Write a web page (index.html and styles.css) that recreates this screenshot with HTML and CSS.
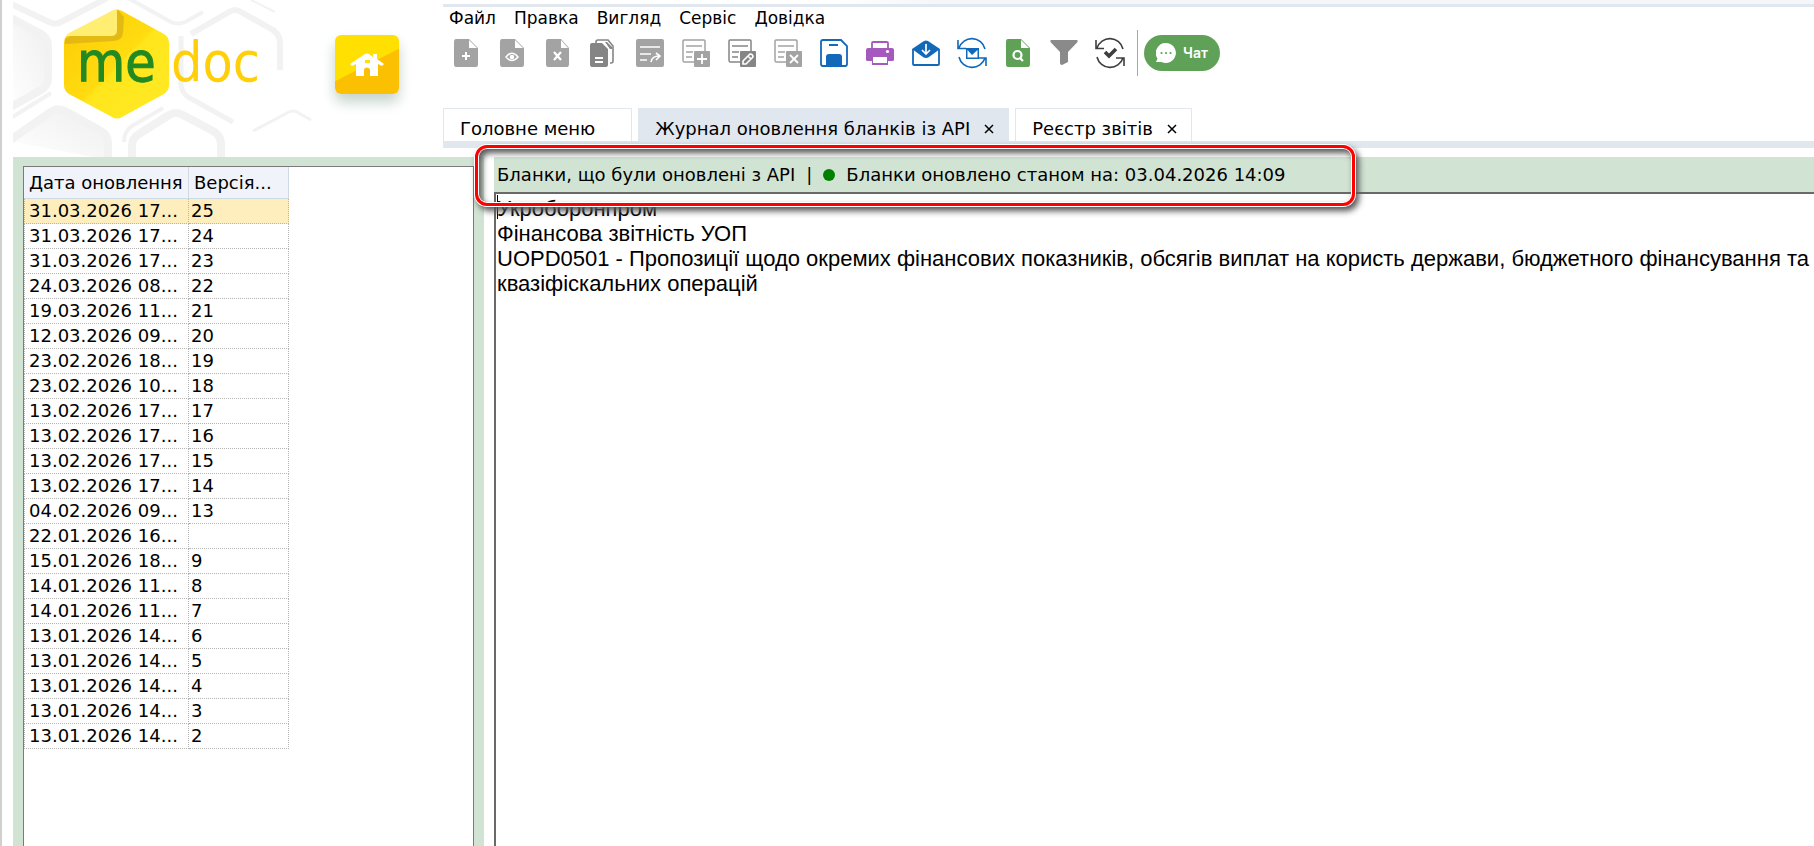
FILE: index.html
```html
<!DOCTYPE html>
<html lang="uk">
<head>
<meta charset="utf-8">
<title>Журнал оновлення бланків із API</title>
<link rel="stylesheet" href="styles.css">
</head>
<body>
<div class="app">
<header class="header">
  <div class="brand">
    <svg class="brand-art" viewBox="0 0 330 157" width="330" height="157" role="img" aria-label="medoc">
      <defs>
        <linearGradient id="gold" x1="0" y1="0" x2="1" y2="1">
          <stop offset="0" stop-color="#fdcb05"/><stop offset=".5" stop-color="#ffdb10"/><stop offset=".53" stop-color="#ffe61c"/><stop offset="1" stop-color="#ffea26"/>
        </linearGradient>
        <linearGradient id="cell" x1="0" y1="1" x2="1" y2="0">
          <stop offset="0" stop-color="#fff"/><stop offset="1" stop-color="#efefef"/>
        </linearGradient>
      </defs>
      <g stroke="#f2f2f2" stroke-width="8" stroke-linejoin="round" fill="none">
        <path fill="url(#cell)" d="M-4 17 28 34Q35 38 35 46V78Q35 86 28 90L-4 108"/>
        <path fill="url(#cell)" d="M-4 141 36 113Q45 106 54 112L88 131Q95 135 95 143V160"/>
        <path d="M119 160V146Q119 138 126 134L156 115Q163 111 170 115L200 131Q208 136 208 144V160"/>
        <path stroke-width="6" d="M-4 3 36 22Q42 25 48 22L94 -2"/>
        <path stroke-width="4" d="M-4 119 38 93M111 142Q111 131 119 126L150 108"/>
        <path stroke-width="4" d="M115 -2 158 22Q165 25 172 22L190 12"/>
        <path stroke-width="6" d="M178 34 216 12Q222 8 228 12L260 30Q267 35 267 43V70"/>
        <path stroke-width="5" d="M168 36V84Q168 92 175 97L220 122"/>
        <path stroke-width="3" d="M240 131 276 112Q280 110 284 112L298 120"/>
        <path stroke-width="2" d="M238 0 262 12"/>
      </g>
      <path fill="url(#gold)" d="M99 11Q104 8 109 11L151 34Q156 37 156 43V85Q156 91 151 94L109 117Q104 120 99 117L56 94Q51 91 51 85V43Q51 37 56 34Z"/>
      <path fill="#d9b016" opacity=".75" d="M105 10 111 17 110 33Q109 41 100 41L52 44V39Z"/>
      <path fill="#ffee72" d="M104 10V30Q104 36 98 36H54Q52 36 56 33L99 11Q102 9 104 10Z"/>
      <text class="logo-me" x="64" y="81">me</text>
      <text class="logo-doc" x="158" y="81">doc</text>
    </svg>
    <button class="home" aria-label="Головна">
      <svg viewBox="0 0 34 24" width="34" height="24"><path fill="#fff" d="M0 11 15 1Q17 0 19 1L23 4V1H27V6L34 11 32 13 28 11V23H20V16Q17 13 14 16V23H6V11L2 13ZM15 7V10H20V7Z"/></svg>
    </button>
  </div>
  <div class="top">
    <nav class="menu">
      <a href="#">Файл</a><a href="#">Правка</a><a href="#">Вигляд</a><a href="#">Сервіс</a><a href="#">Довідка</a>
    </nav>
    <div class="toolbar">
      <button class="tool" aria-label="Створити"><svg viewBox="0 0 28 28"><path fill="#a3a3a3" d="M4 0H17L26 9V25Q26 28 24 28H4Q2 28 2 25V3Q2 0 4 0Z"/><path fill="#fff" d="M17 1V9H25Z"/><path stroke="#fff" stroke-width="2" d="M14 13V21M10 17H18"/></svg></button>
      <button class="tool" aria-label="Переглянути"><svg viewBox="0 0 28 28"><path fill="#a3a3a3" d="M4 0H17L26 9V25Q26 28 24 28H4Q2 28 2 25V3Q2 0 4 0Z"/><path fill="#fff" d="M17 1V9H25Z"/><path fill="none" stroke="#fff" stroke-width="1.500" d="M8 18Q14 10.500 20 18Q14 25 8 18Z"/><circle cx="14" cy="18" r="2.300" fill="#fff"/></svg></button>
      <button class="tool" aria-label="Видалити"><svg viewBox="0 0 28 28"><path fill="#a3a3a3" d="M4 0H17L25 9V25Q25 28 23 28H4Q2 28 2 25V3Q2 0 4 0Z"/><path fill="#fff" d="M17 1V9H24Z"/><path stroke="#fff" stroke-width="2.200" d="M10 13 17 21M17 13 10 21"/></svg></button>
      <button class="tool" aria-label="Копіювати"><svg viewBox="0 0 28 28"><path fill="none" stroke="#858585" stroke-width="1.600" d="M6 4V3Q6 1 8 1H18L23 7V22Q23 24 21 24H20"/><path fill="#858585" d="M2 4H12L18 10V26Q18 28 16 28H2Q0 28 0 26V6Q0 4 2 4ZM15 3H17L22 8V10H20Z"/><path stroke="#fff" stroke-width="1.800" d="M5 19H13M5 23H13"/></svg></button>
      <button class="tool" aria-label="Перемістити"><svg viewBox="0 0 28 28"><rect width="28" height="28" rx="2" fill="#a3a3a3"/><path fill="none" stroke="#fff" stroke-width="1.600" d="M4 8H24M4 15H15M4 21H11M15 23Q16 17 23 17M20 14 24 17 20 21"/></svg></button>
      <button class="tool" aria-label="Додати рядок"><svg viewBox="0 0 28 28"><path fill="none" stroke="#a3a3a3" stroke-width="1.500" d="M23 12V2Q23 1 22 1H2Q1 1 1 2V21Q1 23 2 23H12M4 7H20M4 13H11M4 18H10"/><rect x="12" y="12" width="16" height="16" rx="1" fill="#a3a3a3"/><path stroke="#fff" stroke-width="1.800" d="M20 15V25M15 20H25"/></svg></button>
      <button class="tool" aria-label="Редагувати рядок"><svg viewBox="0 0 28 28"><path fill="none" stroke="#858585" stroke-width="1.500" d="M23 12V2Q23 1 22 1H2Q1 1 1 2V21Q1 23 2 23H12M4 7H20M4 13H11M4 18H10"/><rect x="12" y="12" width="16" height="16" rx="1" fill="#858585"/><path fill="none" stroke="#fff" stroke-width="1.600" d="M15 22 22 15Q25 15 25 18L18 25H15ZM20 17 23 20"/></svg></button>
      <button class="tool" aria-label="Видалити рядок"><svg viewBox="0 0 28 28"><path fill="none" stroke="#a3a3a3" stroke-width="1.500" d="M23 12V2Q23 1 22 1H2Q1 1 1 2V21Q1 23 2 23H12M4 7H20M4 13H11M4 18H10"/><rect x="12" y="12" width="16" height="16" rx="1" fill="#a3a3a3"/><path stroke="#fff" stroke-width="1.800" d="M16 16 24 24M24 16 16 24"/></svg></button>
      <button class="tool" aria-label="Зберегти"><svg viewBox="0 0 28 28"><path fill="none" stroke="#1268b9" stroke-width="1.800" d="M3 1H21L27 7V25Q27 27 25 27H3Q1 27 1 25V3Q1 1 3 1ZM9 6H18"/><path fill="#1268b9" d="M6 27V18Q6 15 9 15H19Q22 15 22 18V27Z"/></svg></button>
      <button class="tool" aria-label="Друк"><svg viewBox="0 0 28 28"><path fill="none" stroke="#a659bd" stroke-width="1.800" d="M6 10V4Q6 3 7 3H21Q22 3 22 4V10"/><path fill="#a659bd" d="M2 9H26Q28 9 28 11V21Q28 22 26 22H22V26H6V22H2Q0 22 0 21V11Q0 9 2 9Z"/><path fill="#fff" d="M7 18H21V24H7Z"/><circle cx="21.500" cy="12.500" r="1.600" fill="#fff"/></svg></button>
      <button class="tool" aria-label="Отримати пошту"><svg viewBox="0 0 28 28"><path fill="none" stroke="#1268b9" stroke-width="1.800" stroke-linejoin="round" d="M1 10V25Q1 26 2 26H26Q27 26 27 25V10"/><path fill="#1268b9" d="M0 10 12 2Q14 1 16 2L28 10 17 18Q14 20 11 18Z"/><path fill="none" stroke="#fff" stroke-width="1.700" d="M14 5V14M10 11 14 15 18 11"/></svg></button>
      <button class="tool" aria-label="Обмін поштою"><svg viewBox="0 0 28 28"><path fill="none" stroke="#1268b9" stroke-width="1.600" d="M27 10A13.500 13.500 0 0 0 1 9M0 1V9.500H8M1 18A13.500 13.500 0 0 0 27 19M28 27V19H20"/><rect x="8" y="9" width="13" height="11" fill="#1268b9"/><path fill="#fff" d="M9.500 11 14 16 19.500 11V18.500H9.500Z"/></svg></button>
      <button class="tool" aria-label="Пошук документа"><svg viewBox="0 0 28 28"><path fill="#5fa257" d="M4 0H17L26 9V25Q26 28 24 28H4Q2 28 2 25V3Q2 0 4 0Z"/><path fill="#fff" d="M17 1V9H25Z"/><circle cx="13.500" cy="16" r="4" fill="none" stroke="#fff" stroke-width="2.200"/><path stroke="#fff" stroke-width="2.200" d="M16 19 19 22"/></svg></button>
      <button class="tool" aria-label="Фільтр"><svg viewBox="0 0 28 28"><path fill="#8a8a8a" d="M1 1H27Q28 1 27.500 3L18 13V23L12 26Q10 26 10 24V13L.5 3Q0 1 1 1Z"/></svg></button>
      <button class="tool" aria-label="Перевірити"><svg viewBox="0 0 28 28"><path fill="none" stroke="#3f3f3f" stroke-width="1.600" d="M27 10A13.500 13.500 0 0 0 1 9M0 1V9.500H8M1 18A13.500 13.500 0 0 0 27 19M28 27V19H20"/><path fill="none" stroke="#3f3f3f" stroke-width="3.600" d="M9 13 13 17 20 10"/></svg></button>
      <span class="divider"></span>
      <button class="chat"><svg viewBox="0 0 20 20" width="20" height="20"><path fill="#fff" d="M10 0A10 10 0 1 1 5.500 19H0L1.500 15.500A10 10 0 0 1 10 0Z"/><g fill="#5fa257"><circle cx="5.500" cy="10" r="1.100"/><circle cx="10" cy="10" r="1.100"/><circle cx="14.500" cy="10" r="1.100"/></g></svg>Чат</button>
    </div>
    <div class="tabs">
      <button class="tab tab-main">Головне меню</button>
      <button class="tab tab-active">Журнал оновлення бланків із API<svg class="close" viewBox="0 0 10 10"><path d="M1 1 9 9M9 1 1 9"/></svg></button>
      <button class="tab">Реєстр звітів<svg class="close" viewBox="0 0 10 10"><path d="M1 1 9 9M9 1 1 9"/></svg></button>
    </div>
  </div>
</header>
<main class="main">
  <section class="side">
    <div class="list">
      <table class="grid">
        <thead><tr><th class="col-date">Дата оновлення</th><th class="col-ver">Версія...</th></tr></thead>
        <tbody>
          <tr class="selected"><td>31.03.2026 17...</td><td>25</td></tr>
          <tr><td>31.03.2026 17...</td><td>24</td></tr>
          <tr><td>31.03.2026 17...</td><td>23</td></tr>
          <tr><td>24.03.2026 08...</td><td>22</td></tr>
          <tr><td>19.03.2026 11...</td><td>21</td></tr>
          <tr><td>12.03.2026 09...</td><td>20</td></tr>
          <tr><td>23.02.2026 18...</td><td>19</td></tr>
          <tr><td>23.02.2026 10...</td><td>18</td></tr>
          <tr><td>13.02.2026 17...</td><td>17</td></tr>
          <tr><td>13.02.2026 17...</td><td>16</td></tr>
          <tr><td>13.02.2026 17...</td><td>15</td></tr>
          <tr><td>13.02.2026 17...</td><td>14</td></tr>
          <tr><td>04.02.2026 09...</td><td>13</td></tr>
          <tr><td>22.01.2026 16...</td><td></td></tr>
          <tr><td>15.01.2026 18...</td><td>9</td></tr>
          <tr><td>14.01.2026 11...</td><td>8</td></tr>
          <tr><td>14.01.2026 11...</td><td>7</td></tr>
          <tr><td>13.01.2026 14...</td><td>6</td></tr>
          <tr><td>13.01.2026 14...</td><td>5</td></tr>
          <tr><td>13.01.2026 14...</td><td>4</td></tr>
          <tr><td>13.01.2026 14...</td><td>3</td></tr>
          <tr><td>13.01.2026 14...</td><td>2</td></tr>
        </tbody>
      </table>
    </div>
  </section>
  <section class="detail">
    <div class="status">
      <label for="forms">Бланки, що були оновлені з API</label><span>|</span><i class="dot"></i><span>Бланки оновлено станом на: 03.04.2026 14:09</span>
    </div>
    <textarea class="editor" id="forms" spellcheck="false">Укроборонпром
Фінансова звітність УОП
UOPD0501 - Пропозиції щодо окремих фінансових показників, обсягів виплат на користь держави, бюджетного фінансування та квазіфіскальних операцій</textarea>
    <span class="caret"></span>
    <div class="highlight"></div>
  </section>
</main>
</div>
</body>
</html>
```
FILE: styles.css
```css
* { box-sizing: border-box; }

body {
  margin: 0;
  background: #fff;
  color: #000;
  font: 18px/20px "DejaVu Sans", Verdana, sans-serif;
}

button {
  border: 0;
  padding: 0;
  background: none;
  color: inherit;
  font: inherit;
}

.app {
  display: flex;
  flex-direction: column;
  height: 100vh;
  overflow: hidden;
  padding-left: 11px;
  border-left: 2px solid #d0d0d0;
}

/* Header */
.header { display: flex; flex: none; }

.brand {
  display: flex;
  align-items: flex-start;
  flex: none;
  width: 430px;
}

.brand-art { flex: none; margin-right: -8px; }

.logo-me, .logo-doc {
  font-family: "DejaVu Sans Condensed", "DejaVu Sans", sans-serif;
  font-size: 55px;
}

.logo-me { fill: #238a22; stroke: #238a22; }
.logo-doc { fill: #ffd00a; }

.home {
  display: flex;
  align-items: center;
  justify-content: center;
  width: 64px;
  height: 59px;
  margin-top: 35px;
  border-radius: 6px;
  background: linear-gradient(153deg, #ffe000 50%, #fbc002 51%);
  box-shadow: 0 8px 14px #c5d3cb;
}

.top {
  display: flex;
  flex: 1;
  flex-direction: column;
  min-width: 0;
}

.top::before {
  content: "";
  height: 4px;
  background: linear-gradient(90deg, #fff 28%, #f4f6f9 36%);
}

.menu {
  display: flex;
  gap: 18px;
  height: 26px;
  padding: 1px 6px;
  border-top: 3px solid #e0e7ef;
  font-size: 17px;
}

.menu a { color: inherit; text-decoration: none; }

.toolbar { display: flex; align-items: center; height: 46px; }

.tool {
  display: flex;
  align-items: center;
  justify-content: center;
  width: 46px;
  height: 46px;
}

.tool svg { width: 28px; height: 28px; overflow: visible; }

.divider {
  width: 1px;
  height: 46px;
  margin: 0 6px 0 4px;
  background: #a8a8a8;
}

.chat {
  display: flex;
  align-items: center;
  justify-content: center;
  gap: 7px;
  width: 76px;
  height: 36px;
  border-radius: 18px;
  background: #5fa257;
  color: #fff;
  font: 600 14px/20px Inter, sans-serif;
}

.tabs {
  display: flex;
  gap: 6px;
  margin: 32px 0 9px;
  border-bottom: 7px solid #e0e7ef;
}

.tab {
  display: flex;
  align-items: center;
  gap: 14px;
  height: 33px;
  padding: 8px 14px 0 16px;
  border: 1px solid #e0e7ef;
  border-bottom: 0;
}

.tab-main { padding-right: 36px; }
.tab-active { background: #e0e7ef; }

.close {
  width: 10px;
  height: 10px;
  fill: none;
  stroke: #000;
  stroke-width: 1.5;
}

/* Work area */
.main {
  display: flex;
  flex: 1;
  gap: 10px;
  min-height: 0;
}

.side {
  display: flex;
  flex: none;
  width: 471px;
  padding: 9px 10px 0;
  background: #d1e4d3;
}

.list {
  flex: 1;
  border: 1px solid #7b7b7b;
  border-bottom: 0;
  background: #fff;
}

.grid {
  width: 265px;
  table-layout: fixed;
  border-spacing: 0;
}

.grid th {
  height: 32px;
  padding: 0 5px;
  border-right: 1px solid #cfdae3;
  border-bottom: 1px solid #cfdae3;
  background: #f0f4fa;
  font-weight: 400;
  text-align: left;
  white-space: nowrap;
}

.col-date { width: 165px; }

.grid td {
  height: 25px;
  padding: 0 2px;
  border-right: 1px dotted #b4b4b4;
  border-bottom: 1px dotted #b4b4b4;
  white-space: nowrap;
}

.grid td:first-child { padding-left: 4px; border-left: 1px dotted #b4b4b4; }
.selected td { background: #feeebd; }

.detail {
  position: relative;
  display: flex;
  flex: 1;
  flex-direction: column;
  min-width: 0;
}

.status {
  display: flex;
  align-items: center;
  flex: none;
  gap: 11px;
  height: 35px;
  padding-left: 3px;
  background: #d1e4d3;
}

.dot {
  width: 12px;
  height: 12px;
  border-radius: 50%;
  background: #008000;
}

.editor {
  flex: 1;
  margin: 0;
  padding: 2px 0 0 1px;
  border: solid #696969;
  border-width: 2px 0 0 2px;
  outline: 0;
  resize: none;
  color: #000;
  font: 22px/25px "Liberation Sans", Arial, sans-serif;
}

.caret {
  position: absolute;
  top: 38px;
  left: 3px;
  width: 1px;
  height: 24px;
  background: #000;
}

/* Callout frame over the status line */
.highlight {
  position: absolute;
  top: -12px;
  left: -19px;
  width: 880px;
  height: 61px;
  border: 3px solid #f00;
  border-radius: 12px;
  box-shadow: 0 0 0 1px #fff, inset 0 0 0 1px #fff, 3px 4px 6px 1px #555, inset 3px 4px 6px 1px #555;
  pointer-events: none;
}
```
